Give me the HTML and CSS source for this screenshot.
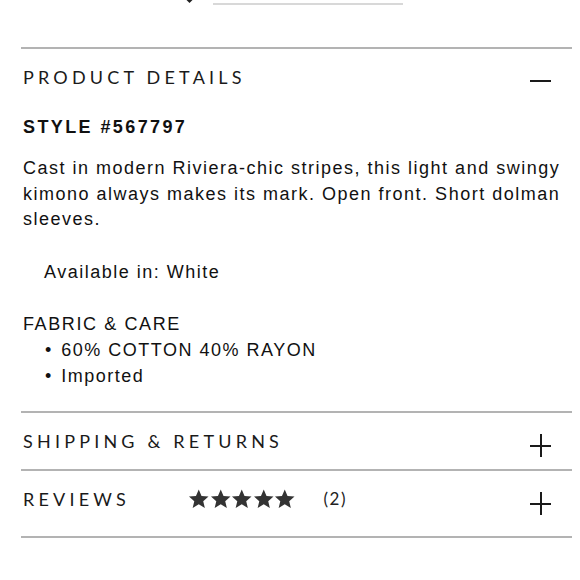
FILE: index.html
```html
<!DOCTYPE html>
<html>
<head>
<meta charset="utf-8">
<link rel="stylesheet" href="styles.css">
</head>
<body>
<div class="top-strip">
  <svg class="chev" width="8" height="4" viewBox="0 0 8 4"><path d="M0 0 L4 4 L8 0 Z" fill="#222"/></svg>
  <span class="select-line"></span>
</div>
<div class="accordion">
  <section class="panel">
    <div class="panel-head">
      <h2 class="panel-title">PRODUCT DETAILS</h2>
      <span class="icon-minus"></span>
    </div>
    <div class="panel-body">
      <p class="style-no">STYLE #567797</p>
      <p class="desc">Cast in modern Riviera-chic stripes, this light and swingy kimono always makes its mark. Open front. Short dolman sleeves.</p>
      <p class="avail">Available in: White</p>
      <p class="fabric-title">FABRIC &amp; CARE</p>
      <ul class="fabric-list">
        <li>60% COTTON 40% RAYON</li>
        <li>Imported</li>
      </ul>
    </div>
  </section>
  <section class="panel">
    <div class="panel-head">
      <h2 class="panel-title">SHIPPING &amp; RETURNS</h2>
      <span class="icon-plus"></span>
    </div>
  </section>
  <section class="panel panel-last">
    <div class="panel-head">
      <div class="reviews-left">
        <h2 class="panel-title">REVIEWS</h2>
        <span class="stars">
          <svg viewBox="0 0 24 22"><path d="M12 0.5l3.1 7.2 7.8 0.6-5.9 5.1 1.8 7.6L12 16.9 5.2 21l1.8-7.6L1.1 8.3l7.8-0.6z"/></svg>
          <svg viewBox="0 0 24 22"><path d="M12 0.5l3.1 7.2 7.8 0.6-5.9 5.1 1.8 7.6L12 16.9 5.2 21l1.8-7.6L1.1 8.3l7.8-0.6z"/></svg>
          <svg viewBox="0 0 24 22"><path d="M12 0.5l3.1 7.2 7.8 0.6-5.9 5.1 1.8 7.6L12 16.9 5.2 21l1.8-7.6L1.1 8.3l7.8-0.6z"/></svg>
          <svg viewBox="0 0 24 22"><path d="M12 0.5l3.1 7.2 7.8 0.6-5.9 5.1 1.8 7.6L12 16.9 5.2 21l1.8-7.6L1.1 8.3l7.8-0.6z"/></svg>
          <svg viewBox="0 0 24 22"><path d="M12 0.5l3.1 7.2 7.8 0.6-5.9 5.1 1.8 7.6L12 16.9 5.2 21l1.8-7.6L1.1 8.3l7.8-0.6z"/></svg>
        </span>
        <span class="count">(2)</span>
      </div>
      <span class="icon-plus"></span>
    </div>
  </section>
</div>
</body>
</html>
```
FILE: styles.css
```css
html, body {
  margin: 0;
  padding: 0;
  background: #fff;
  color: #111;
}
body {
  font-family: "Liberation Sans", Arial, sans-serif;
}
.top-strip {
  height: 6px;
  display: flex;
  align-items: flex-start;
  padding-left: 186px;
}
.chev {
  display: block;
  width: 7px;
  height: 3px;
}
.select-line {
  display: block;
  margin-left: 20px;
  margin-top: 3px;
  width: 190px;
  height: 2px;
  background: #d8d8d8;
}
.accordion {
  margin: 41px 8px 0 21px;
}
.panel {
  border-top: 2px solid #b3b3b3;
}
.panel-last {
  border-bottom: 2px solid #b3b3b3;
  padding-bottom: 9px;
}
.panel-head {
  display: flex;
  align-items: center;
  justify-content: space-between;
  height: 56px;
  padding-left: 2px;
  padding-right: 21px;
}
.panel-title {
  margin: 0;
  font-family: Lato, "Liberation Sans", sans-serif;
  font-weight: 400;
  font-size: 18px;
  letter-spacing: 4.2px;
  color: #1a1a1a;
}
.icon-minus {
  width: 21px;
  height: 2px;
  background: #1a1a1a;
  margin-top: 8px;
}
.icon-plus {
  position: relative;
  width: 21px;
  height: 23px;
  margin-top: 10px;
}
.icon-plus::before,
.icon-plus::after {
  content: "";
  position: absolute;
  background: #1a1a1a;
}
.icon-plus::before {
  left: 0;
  right: 0;
  top: 11px;
  height: 2px;
}
.icon-plus::after {
  top: 0;
  bottom: 0;
  left: 10px;
  width: 2px;
}
.panel-body {
  padding: 9px 0 22px 2px;
  font-size: 18px;
  letter-spacing: 1.5px;
  color: #111;
}
.panel-body p {
  margin: 0;
}
.style-no {
  font-weight: 700;
  font-size: 18px;
  letter-spacing: 2.4px;
  line-height: 26px;
}
.desc {
  margin-top: 16px !important;
  line-height: 25.5px;
}
.avail {
  margin-top: 26px !important;
  padding-left: 21px;
  line-height: 26px;
}
.fabric-title {
  margin-top: 26px !important;
  font-size: 18px;
  letter-spacing: 1.6px;
  line-height: 26px;
}
.fabric-list {
  list-style: none;
  margin: 0;
  padding: 0 0 0 22px;
  line-height: 26px;
}
.fabric-list li::before {
  content: "\2022";
  margin-right: 10px;
  letter-spacing: 0;
}
.reviews-left {
  display: flex;
  align-items: center;
}
.stars {
  display: flex;
  margin-left: 58px;
}
.stars svg {
  width: 21.5px;
  height: 20px;
  fill: #333;
}
.count {
  margin-left: 28px;
  font-family: Lato, "Liberation Sans", sans-serif;
  font-size: 17px;
  letter-spacing: 1.5px;
  color: #222;
}
```
